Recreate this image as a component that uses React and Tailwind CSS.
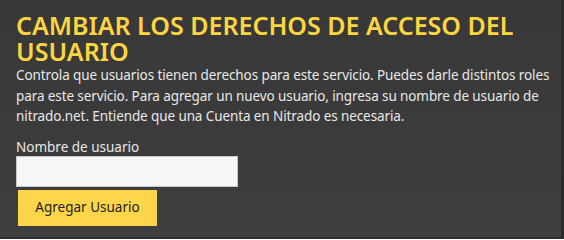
export default function App() {
  return (
    <div className="w-[564px] h-[239px] bg-[#2c2c2c] overflow-hidden" style={{ fontFamily: '"Noto Sans", "Open Sans", sans-serif' }}>
      <div className="w-[561px] h-[237px] bg-[#393939] bg-[linear-gradient(180deg,#383838_0%,#3b3b3b_60%,#3f3f3f_100%)] pl-4 pt-[12px]">
        <h1 className="text-[25px] leading-[26px] font-semibold text-[#fdd63f]">
          CAMBIAR LOS DERECHOS DE ACCESO DEL USUARIO
        </h1>
        <p className="mt-[1px] w-[540px] text-[13.5px] leading-[20.5px] text-[#e8e8e8] tracking-[-0.1px]">
          Controla que usuarios tienen derechos para este servicio. Puedes darle distintos roles para este servicio. Para agregar un nuevo usuario, ingresa su nombre de usuario de nitrado.net. Entiende que una Cuenta en Nitrado es necesaria.
        </p>
        <label className="block mt-[11px] text-[13.5px] leading-[18px] text-[#e8e8e8]">Nombre de usuario</label>
        <input className="block w-[222px] h-[31px] bg-[#f7f7f7] border border-[#c8c8c8] outline-none" />
        <button className="block mt-[3px] ml-[2px] w-[139px] h-[36px] bg-[#ffd54a] text-[13.5px] text-[#222]">
          Agregar Usuario
        </button>
      </div>
    </div>
  );
}
